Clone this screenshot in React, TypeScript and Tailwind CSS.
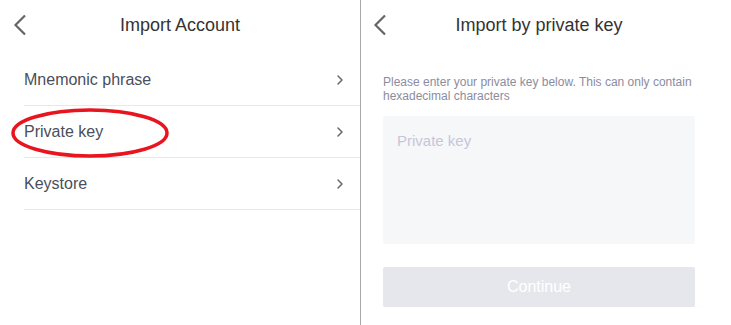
import { ChevronRight } from "lucide-react";

const rows = ["Mnemonic phrase", "Private key", "Keystore"];

function Back({ className }: { className: string }) {
  return (
    <svg className={className} width="14" height="22" viewBox="0 0 14 22">
      <polyline points="12,1.5 2.5,11 12,20.5" fill="none" stroke="#666" strokeWidth="2.2" />
    </svg>
  );
}

export default function App() {
  return (
    <div className="flex h-[325px] w-[731px] bg-white font-['Liberation_Sans',Arial,sans-serif]">
      {/* left: choose import type */}
      <div className="relative w-[361px] shrink-0 border-r border-[#a8a8a8]">
        <div className="relative flex h-[54px] items-center justify-center pb-[4px]">
          <Back className="absolute left-[13px] top-[14px]" />
          <span className="text-[18px] text-[#333]">Import Account</span>
        </div>
        <div className="pl-[24px]">
          {rows.map((r) => (
            <div
              key={r}
              className="flex h-[52px] items-center justify-between border-b border-[#e8e8e8] pr-[12px]"
            >
              <span className="text-[16px] text-[#4a4f5a]">{r}</span>
              <ChevronRight className="h-[16px] w-[16px] text-[#666]" strokeWidth={2.2} />
            </div>
          ))}
        </div>
        <svg className="absolute left-[10px] top-[106px]" width="162" height="54" viewBox="0 0 162 54">
          <ellipse cx="80" cy="27" rx="77" ry="23" fill="none" stroke="#e8141e" strokeWidth="3.5" />
        </svg>
      </div>

      {/* right: private key form */}
      <div className="flex flex-1 flex-col">
        <div className="relative flex h-[50px] items-center justify-center pr-[14px]">
          <Back className="absolute left-[12px] top-[14px]" />
          <span className="text-[18px] text-[#333]">Import by private key</span>
        </div>
        <div className="px-[22px] pt-[25px]">
          <p className="text-[12px] leading-[14px] text-[#8c8ca0]">
            Please enter your private key below. This can only contain hexadecimal characters
          </p>
          <div className="mt-[13px] h-[128px] w-[312px] rounded-[2px] bg-[#f6f7f9] px-[14px] pt-[13px]">
            <span className="text-[15px] text-[#c6c6d9]">Private key</span>
          </div>
          <button className="mt-[23px] flex h-[40px] w-[312px] items-center justify-center rounded-[2px] bg-[#e6e7ec] text-[16px] text-white">
            Continue
          </button>
        </div>
      </div>
    </div>
  );
}
